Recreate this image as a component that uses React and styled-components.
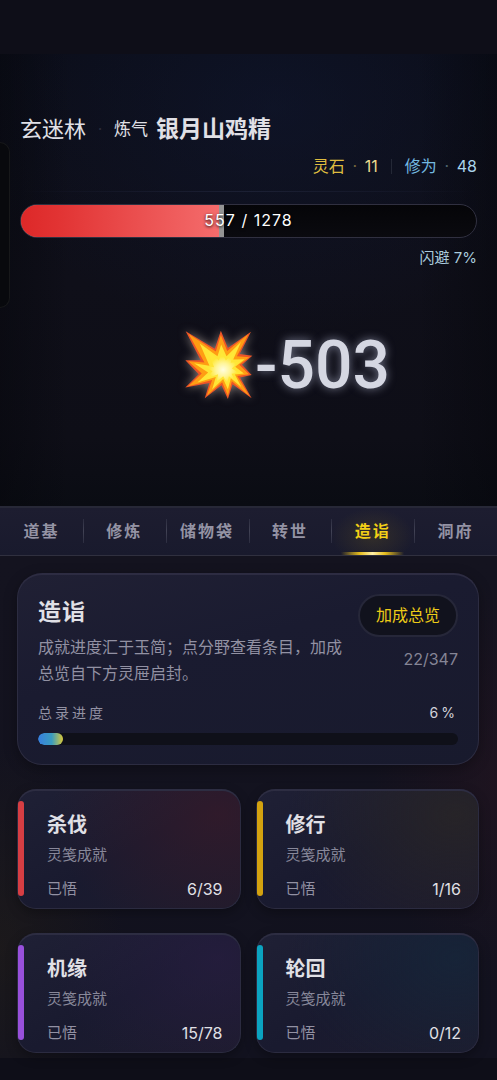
import React, { useState } from 'react';
import styled, { createGlobalStyle } from 'styled-components';

const GlobalStyle = createGlobalStyle`
  *, *::before, *::after {
    box-sizing: border-box;
  }

  body {
    background: #0e0e18;
    color: #e0e0e6;
    font-family: Inter, "Noto Sans CJK SC", sans-serif;
    font-size: 16px;
    margin: 0;
  }

  button {
    color: inherit;
    cursor: pointer;
    font: inherit;
  }

  h1, h2, h3, p {
    font-weight: 400;
    margin: 0;
  }
`;

const Page = styled.div`
  display: flex;
  flex-direction: column;
  min-height: 100vh;
  overflow: hidden;
  padding: 54px 0 24px;
  position: relative;
`;

const Battle = styled.section`
  background:
    linear-gradient(90deg, rgba(5, 6, 11, 0.45), transparent 14%, transparent 84%, rgba(5, 6, 11, 0.45)),
    radial-gradient(ellipse 60% 50% at 55% 12%, rgba(17, 25, 52, 0.5), transparent),
    linear-gradient(180deg, #0b0d18, #0f0f19 50%, #0e0e17 85%, #0a0c13);
  display: flex;
  flex-direction: column;
  height: 452px;
  padding: 59px 20px 0;
`;

const Drawer = styled.aside`
  background: #08090d;
  border: 1px solid #17181a;
  border-left: 0;
  border-radius: 0 12px 12px 0;
  height: 166px;
  left: 0;
  position: absolute;
  top: 142px;
  width: 10px;
`;

const TitleRow = styled.div`
  align-items: center;
  display: flex;
  line-height: 32px;
`;

const Place = styled.span`
  font-size: 22px;
`;

const Dot = styled.span`
  color: ${({ $color }) => $color || '#2a2c3a'};
  text-align: center;
  width: ${({ $wide }) => ($wide ? '28px' : '20px')};
`;

const Realm = styled.span`
  font-size: 17px;
  margin-right: 8px;
`;

const EnemyName = styled.h1`
  font-size: 23px;
  font-weight: 700;
`;

const Resources = styled.div`
  align-items: center;
  display: flex;
  justify-content: flex-end;
  line-height: 24px;
  margin-top: 9px;
`;

const Resource = styled.span`
  color: ${({ $color }) => $color};
  display: flex;
`;

const Amount = styled.span`
  color: ${({ $color }) => $color};
`;

const Divider = styled.span`
  background: #242836;
  height: 15px;
  margin: 0 13px;
  width: 1px;
`;

const Hairline = styled.div`
  background: linear-gradient(90deg, transparent, #1c2034 50%, transparent);
  height: 1px;
  margin: 13px 0 12px;
`;

const Health = styled.div`
  background: linear-gradient(180deg, #050508, #0a0a0f);
  border: 1px solid #303040;
  border-radius: 17px;
  display: grid;
  height: 34px;
  overflow: hidden;

  & > * {
    grid-area: 1 / 1;
  }
`;

const HealthTrail = styled.div`
  background: #949494;
`;

const HealthFill = styled.div`
  background: linear-gradient(90deg, #dd2828, #e23434 20%, #f46c6c);
`;

const HealthText = styled.span`
  color: #fff;
  letter-spacing: 1px;
  line-height: 31px;
  text-align: center;
  text-shadow: 0 1px 3px rgba(0, 0, 0, 0.9);
`;

const Dodge = styled.p`
  color: #a9cbdc;
  font-size: 15px;
  line-height: 24px;
  margin-top: 8px;
  text-align: right;
`;

const Damage = styled.div`
  align-items: center;
  display: flex;
  justify-content: center;
  line-height: 84px;
  margin-top: 52px;
  padding-left: 76px;
`;

const DamageText = styled.strong`
  color: #d5d7e2;
  font-family: Roboto, sans-serif;
  font-size: 66px;
  font-weight: 500;
  padding-top: 2px;
  text-shadow: 0 0 10px rgba(220, 225, 255, 0.5);
`;

const Burst = styled.svg`
  filter: drop-shadow(0 0 5px rgba(255, 235, 220, 0.5));
  height: 72px;
  overflow: visible;
  width: 72px;
`;

const Tabs = styled.nav`
  background: linear-gradient(180deg, #1d1d30, #191a2d);
  border-bottom: 1px solid #30303f;
  border-top: 2px solid #272837;
  display: grid;
  grid-template-columns: repeat(6, 1fr);
  height: 50px;
`;

const Tab = styled.button`
  background: ${({ $active }) =>
    $active ? 'radial-gradient(ellipse at 50% 60%, rgba(120, 100, 30, 0.25), transparent 70%)' : 'none'};
  border: 0;
  color: ${({ $active }) => ($active ? '#f2cf17' : '#9493a4')};
  font-weight: 700;
  letter-spacing: 2px;
  line-height: 24px;
  padding: 0 0 1px;
  position: relative;
  white-space: nowrap;

  &:not(:first-child)::before {
    background: linear-gradient(180deg, #2c2d40, #414254, #2c2d40);
    content: '';
    height: 24px;
    left: 0;
    position: absolute;
    top: 11px;
    width: 1px;
  }

  &::after {
    background: linear-gradient(90deg, transparent, #e6bd1e 30%, #fff0a8 50%, #e6bd1e 70%, transparent);
    bottom: 0;
    content: '';
    display: ${({ $active }) => ($active ? 'block' : 'none')};
    height: 3px;
    left: 10px;
    position: absolute;
    right: 10px;
  }
`;

const Content = styled.main`
  background:
    radial-gradient(ellipse 25% 40% at 100% 45%, rgba(60, 22, 32, 0.25), transparent),
    radial-gradient(ellipse 25% 40% at 0% 78%, rgba(48, 40, 18, 0.3), transparent),
    linear-gradient(180deg, #14131f, #12121f);
  display: flex;
  flex-direction: column;
  gap: 24px;
  padding: 17px 18px 5px 17px;
`;

const Panel = styled.section`
  background: linear-gradient(165deg, #202034, #1a1b30 40%, #181a2d);
  border: 1px solid #2c2c41;
  border-radius: 25px;
  border-top: 2px solid #2d2c42;
  box-shadow: 0 4px 14px rgba(0, 0, 0, 0.3);
  padding: 19px 20px;
`;

const PanelHead = styled.div`
  display: flex;
  gap: 14px;
  justify-content: space-between;
`;

const PanelTitle = styled.h2`
  font-size: 23px;
  font-weight: 700;
  letter-spacing: 1px;
  line-height: 36px;
`;

const Intro = styled.p`
  color: #9291a3;
  line-height: 26px;
  margin-top: 4px;
`;

const Side = styled.div`
  align-items: flex-end;
  display: flex;
  flex: none;
  flex-direction: column;
  gap: 10px;
`;

const OverviewButton = styled.button`
  background: #11121d;
  border: 2px solid #262739;
  border-radius: 22px;
  color: #edcb17;
  height: 43px;
  line-height: 24px;
  padding: 0 16px 1px;
`;

const Count = styled.span`
  color: #858596;
  line-height: 24px;
`;

const ProgressHead = styled.div`
  color: #9291a3;
  display: flex;
  font-size: 14px;
  justify-content: space-between;
  letter-spacing: 3px;
  line-height: 24px;
  margin-top: 15px;
`;

const Percent = styled.span`
  color: #d2d2da;
`;

const Track = styled.div`
  background: #0f1019;
  border-radius: 6px;
  height: 12px;
  margin-top: 8px;
  overflow: hidden;
`;

const TrackFill = styled.div`
  background: linear-gradient(90deg, #387fe0, #3a9cbf 55%, #d9c93a);
  border-radius: 6px;
  height: 100%;
`;

const Cards = styled.div`
  display: grid;
  gap: 24px 15px;
  grid-template-columns: 1fr 1fr;
`;

const Card = styled.button`
  background:
    radial-gradient(ellipse 75% 110% at 90% 20%, ${({ $glow }) => $glow}, transparent),
    linear-gradient(150deg, #1f2035, #191a2f 50%, #1d1b2d);
  border: 1px solid #2b2b40;
  border-radius: 19px;
  border-top: 2px solid #2d2d42;
  box-shadow: 0 4px 12px rgba(0, 0, 0, 0.3);
  display: flex;
  flex-direction: column;
  height: 120px;
  padding: 18px 17px 0 29px;
  position: relative;
  text-align: left;

  &::before {
    background: ${({ $accent }) => $accent};
    border-radius: 3px;
    bottom: 12px;
    content: '';
    left: 0;
    position: absolute;
    top: 10px;
    width: 6px;
  }
`;

const CardTitle = styled.span`
  font-size: 20px;
  font-weight: 700;
  line-height: 32px;
`;

const CardKind = styled.span`
  color: #88889a;
  font-size: 15px;
  line-height: 28px;
`;

const CardFoot = styled.span`
  align-self: stretch;
  color: #9291a3;
  display: flex;
  font-size: 15px;
  justify-content: space-between;
  line-height: 24px;
  margin-top: 8px;
`;

const CardCount = styled.span`
  color: #e0e0e6;
  font-size: 16px;
`;

const tabs = ['道基', '修炼', '储物袋', '转世', '造诣', '洞府'];

const categories = [
  { name: '杀伐', count: '6/39', accent: '#d63e43', glow: 'rgba(62, 26, 40, 0.6)' },
  { name: '修行', count: '1/16', accent: '#d3a20f', glow: 'rgba(42, 38, 38, 0.8)' },
  { name: '机缘', count: '15/78', accent: '#9850db', glow: 'rgba(42, 30, 68, 0.6)' },
  { name: '轮回', count: '0/12', accent: '#0ba3c0', glow: 'rgba(22, 38, 58, 0.8)' },
];

const hp = { current: 557, max: 1278 };

const BurstIcon = () => (
  <Burst viewBox="70 55 215 215" aria-hidden="true">
    <defs>
      <radialGradient id="burst-core" cx="0.56" cy="0.6" r="0.4">
        <stop offset="0" stopColor="#fffde0" />
        <stop offset="0.5" stopColor="#fff59a" />
        <stop offset="1" stopColor="#ffe838" />
      </radialGradient>
    </defs>
    <path
      fill="#ee5527"
      d="M78 62 L165 114 L183 60 L204 112 L273 63 L239 130 L277 135 L246 162 L275 192 L240 200 L275 262 L218 220 L204 264 L185 223 L135 262 L149 216 L77 230 L117 190 L77 148 L123 148 Z"
    />
    <path
      fill="#ff9d13"
      d="M87 70 L168 122 L183 73 L202 121 L265 71 L231 136 L268 139 L238 162 L267 190 L232 195 L268 255 L216 211 L204 254 L187 214 L141 254 L157 207 L86 226 L126 188 L86 151 L134 155 Z"
    />
    <path
      fill="#ffe536"
      d="M120 98 L173 136 L184 101 L200 136 L243 94 L220 146 L254 145 L226 168 L252 188 L225 191 L244 228 L213 202 L204 235 L190 204 L157 236 L168 198 L113 215 L145 185 L103 157 L149 165 Z"
    />
    <path
      fill="url(#burst-core)"
      d="M143 118 L177 149 L186 125 L198 149 L225 121 L212 156 L235 153 L216 173 L236 186 L215 189 L225 209 L207 196 L202 216 L190 196 L170 213 L175 190 L139 203 L158 181 L131 165 L163 169 Z"
    />
  </Burst>
);

const App = () => {
  const [active, setActive] = useState('造诣');
  const hpPercent = (hp.current / hp.max) * 100;

  return (
    <Page>
      <GlobalStyle />
      <Battle>
        <TitleRow>
          <Place>玄迷林</Place>
          <Dot $wide>·</Dot>
          <Realm>炼气</Realm>
          <EnemyName>银月山鸡精</EnemyName>
        </TitleRow>
        <Resources>
          <Resource $color="#dfbd40">
            灵石<Dot $color="#77693f">·</Dot><Amount $color="#ecd98e">11</Amount>
          </Resource>
          <Divider />
          <Resource $color="#73b9e0">
            修为<Dot $color="#4f6570">·</Dot><Amount $color="#a9d5eb">48</Amount>
          </Resource>
        </Resources>
        <Hairline />
        <Health role="progressbar" aria-label="气血" aria-valuenow={hp.current} aria-valuemax={hp.max}>
          <HealthTrail style={{ width: `${hpPercent + 1}%` }} />
          <HealthFill style={{ width: `${hpPercent}%` }} />
          <HealthText>{hp.current} / {hp.max}</HealthText>
        </Health>
        <Dodge>闪避 7%</Dodge>
        <Damage>
          <BurstIcon />
          <DamageText>-503</DamageText>
        </Damage>
      </Battle>
      <Drawer />
      <Tabs>
        {tabs.map((tab) => (
          <Tab key={tab} type="button" $active={tab === active} onClick={() => setActive(tab)}>
            {tab}
          </Tab>
        ))}
      </Tabs>
      <Content>
        <Panel>
          <PanelHead>
            <div>
              <PanelTitle>造诣</PanelTitle>
              <Intro>成就进度汇于玉简；点分野查看条目，加成总览自下方灵屉启封。</Intro>
            </div>
            <Side>
              <OverviewButton type="button">加成总览</OverviewButton>
              <Count>22/347</Count>
            </Side>
          </PanelHead>
          <ProgressHead>
            <span id="total-progress">总录进度</span>
            <Percent>6%</Percent>
          </ProgressHead>
          <Track role="progressbar" aria-labelledby="total-progress" aria-valuenow={6}>
            <TrackFill style={{ width: '6%' }} />
          </Track>
        </Panel>
        <Cards>
          {categories.map(({ name, count, accent, glow }) => (
            <Card key={name} type="button" $accent={accent} $glow={glow}>
              <CardTitle>{name}</CardTitle>
              <CardKind>灵笺成就</CardKind>
              <CardFoot>
                已悟
                <CardCount>{count}</CardCount>
              </CardFoot>
            </Card>
          ))}
        </Cards>
      </Content>
    </Page>
  );
};

export default App;
